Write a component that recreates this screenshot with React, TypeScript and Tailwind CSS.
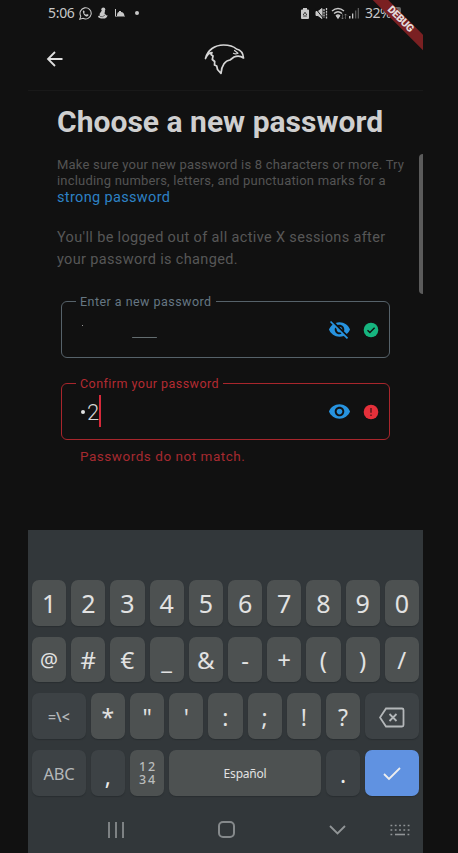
import React from "react";

const keyBase = "flex h-[45.5px] items-center justify-center rounded-[7px] shadow-[0_1px_1px_#292e31]";
const light = "bg-[#4d5151] text-[#e2e2e2]";
const dark = "bg-[#3d4245] text-[#b4b7b9]";

function Key({ children, className = "w-[34.2px]", tone = light, shift = "mt-[2px]" }: { children: React.ReactNode; className?: string; tone?: string; shift?: string }) {
  return (
    <div className={`${keyBase} ${tone} ${className}`}>
      <span className={`leading-none ${shift}`}>{children}</span>
    </div>
  );
}

function StatusBar() {
  return (
    <div className="flex h-[26px] items-center pl-[20px] text-[#c8c8c8]">
      <span className="w-[31px] whitespace-nowrap font-['Noto_Sans'] text-[14px] leading-none tracking-[-0.3px]">5:06</span>
      <svg width="13" height="13" viewBox="0 0 24 24" fill="none" stroke="currentColor" strokeWidth="2">
        <path d="M1.5 22.5l1.8-5.6a10.3 10.3 0 1 1 4 3.9z" />
        <path d="M7.2 6.7l2-.3 1.5 3-1.2 1.8c1 1.8 2 2.6 3.7 3.3l1.5-1.5 2.9 1.4c-.1 2-1.6 3-3.1 3C11 17.400 6.500 12 7.200 6.700z" fill="currentColor" stroke="none" />
      </svg>
      <svg className="ml-[6px]" width="10" height="12" viewBox="0 0 10 12" fill="currentColor">
        <circle cx="5.300" cy="2.500" r="2" />
        <path d="M3.500 4h3.500l-.5 2.500 2 2L9.500 8l-.5 2-2 1.500H3L.5 10.500 0 9l2-.5L1.500 7z" />
        <path d="M2 9.500q3 1 5-1.500" fill="none" stroke="#111" strokeWidth=".5" />
      </svg>
      <svg className="ml-[7px]" width="10" height="10" viewBox="0 0 10 10" fill="currentColor">
        <path d="M0 1h1v7H0zM2 7q.3-3.200 2-3V3h2v1q3 .2 3.500 4H2z" /><path d="M0 8h10v1H0z" opacity=".5" />
      </svg>
      <i className="ml-[10px] h-[4px] w-[4px] rounded-full bg-current" />
      <svg className="ml-[161px]" width="10" height="13" viewBox="0 0 10 13">
        <path d="M3 1h4v1.500h1q1 0 1 1V11q0 1-1 1H2q-1 0-1-1V3.500q0-1 1-1h1z" fill="currentColor" />
        <path d="M3.200 8L5 5.300 6.800 8M3.200 9h3.600" fill="none" stroke="#111" strokeWidth=".8" />
      </svg>
      <svg className="ml-[5px]" width="13" height="13" viewBox="0 0 13 13" fill="none" stroke="currentColor">
        <path d="M1 4.500h2l4-3v10l-4-3H1z" fill="currentColor" /><path d="M.5 1.500l8 10" stroke="#111" strokeWidth="1" /><path d="M9 2v9M11.500 1v11" strokeDasharray="2 .8" strokeWidth="1.300" />
      </svg>
      <svg className="ml-[3px]" width="17" height="13" viewBox="0 0 17 13" fill="none" stroke="currentColor" strokeWidth="1.400">
        <path d="M1 4q6-5 12 0M3 6.500q4-3.500 8 0M5 9q2-2 4 0" /><path d="M6 9.500h2L7 11z" fill="currentColor" />
        <path d="M11.500 7v5M14.500 7v5M10 10.500l1.500 1.500 1.500-1.500M13 8.500L14.500 7 16 8.500" strokeWidth=".8" opacity=".45" />
      </svg>
      <svg width="12" height="12" viewBox="0 0 12 12" fill="currentColor">
        <path d="M1 9h1.500v2.500H1zM4 6.500h1.300v5H4z" /><path d="M7 3.500h1.300v8H7zM9.700 1H11v10.500H9.700z" opacity=".4" />
      </svg>
      <span className="ml-[5px] whitespace-nowrap font-['Noto_Sans'] text-[14px] leading-none tracking-[-0.5px]">32%</span>
      <i className="ml-[2px] h-[12px] w-[8px] rounded-[2px] bg-[#666]" />
    </div>
  );
}

function Eye({ off = false }: { off?: boolean }) {
  return (
    <svg width="23" height="23" viewBox="0 0 24 24" fill="#2793df">
      {off ? (
        <path d="M12 7c2.760 0 5 2.240 5 5 0 .65-.13 1.260-.36 1.830l2.920 2.920c1.510-1.260 2.700-2.890 3.430-4.750-1.730-4.390-6-7.500-11-7.500-1.400 0-2.740.25-3.980.7l2.160 2.160C10.740 7.130 11.350 7 12 7zM2 4.270l2.280 2.280.46.46C3.080 8.300 1.780 10.020 1 12c1.730 4.390 6 7.500 11 7.500 1.550 0 3.030-.3 4.380-.84l.42.42L19.730 22 21 20.730 3.270 3 2 4.270zM7.530 9.800l1.550 1.550c-.05.21-.08.43-.08.65 0 1.660 1.340 3 3 3 .22 0 .44-.03.65-.08l1.550 1.550c-.67.33-1.410.53-2.200.53-2.760 0-5-2.240-5-5 0-.79.2-1.530.53-2.200zm4.310-.78l3.150 3.150.02-.16c0-1.660-1.340-3-3-3l-.17.01z" />
      ) : (
        <path d="M12 4.500C7 4.500 2.730 7.610 1 12c1.730 4.390 6 7.500 11 7.500s9.270-3.110 11-7.500c-1.730-4.390-6-7.500-11-7.500zM12 17c-2.760 0-5-2.240-5-5s2.240-5 5-5 5 2.240 5 5-2.240 5-5 5zm0-8c-1.660 0-3 1.340-3 3s1.340 3 3 3 3-1.340 3-3-1.340-3-3-3z" />
      )}
    </svg>
  );
}

function Status({ ok = false }: { ok?: boolean }) {
  return (
    <svg className="ml-[12px]" width="16" height="16" viewBox="0 0 16 16">
      <circle cx="8" cy="8" r="7.300" fill={ok ? "#16b57f" : "#e5303a"} />
      {ok ? <path d="M4.500 8.200l2.400 2.400 4.700-4.900" fill="none" stroke="#111" strokeWidth="1.400" /> : <path d="M8 4v4.700M8 10.400v1.700" stroke="#791c22" strokeWidth="1.900" />}
    </svg>
  );
}

export default function App() {
  return (
    <div className="h-[853px] w-[458px] overflow-hidden bg-[#111111] font-['Roboto',sans-serif]">
      <div className="relative ml-[28px] flex h-[853px] w-[395px] flex-col overflow-hidden">
        <StatusBar />
        <div className="absolute right-[-22px] top-[14px] flex h-[11px] w-[90px] origin-center rotate-45 items-center justify-center bg-[#7a2022] text-[10.5px] font-black leading-none tracking-[-0.3px] text-[#e4dddd]">DEBUG</div>
        <header className="flex h-[65px] items-center border-b border-[#191919] pl-[18px]">
          <svg className="mt-[2px]" width="18" height="18" viewBox="0 0 18 18" fill="none" stroke="#dedede" strokeWidth="1.800"><path d="M16.500 9H2.500M9 2L2 9l7 7" /></svg>
          <svg className="ml-[140px] mt-[4px]" width="42" height="34" viewBox="0 0 42 34" fill="none" stroke="#d6d6d6" strokeWidth="1.700" strokeLinejoin="round" strokeLinecap="round">
            <path d="M1.500 15.500C3.500 7 11 2 19.500 2c6 0 10 1.200 13 4 4 1 6.700 4.500 7 9-3-2.300-6.500-2.200-9.500-1l-4 3c-4.500.5-8.500 5-9 13.500l-3.500-4-.8-3.500-2.200-1 .2-3.500-2.400-2 .7-3.500-2-1.500 1-2q-4 .5-6.500 6z" />
            <path d="M30.500 7.500l3.500 2.800q-2.500 1.200-4.500 0" strokeWidth="1.200" />
          </svg>
        </header>
        <div className="flex h-[439px]">
          <main className="w-[391px] pl-[29px]">
            <h1 className="mt-[12px] whitespace-nowrap text-[30px] font-bold leading-[38px] tracking-[0.02px] text-[#cfcfcf]">Choose a new password</h1>
            <p className="mt-[16px] whitespace-nowrap text-[13px] leading-[15.5px] tracking-[0.2px] text-[#545454]">Make sure your new password is 8 characters or more. Try<br />including numbers, letters, and punctuation marks for a</p>
            <p className="mt-px whitespace-nowrap text-[14.5px] leading-[18px] tracking-[0.35px] text-[#2d81c5]">strong password</p>
            <p className="mt-[20px] whitespace-nowrap text-[14.5px] leading-[21.5px] tracking-[0.35px] text-[#575757]">You'll be logged out of all active X sessions after<br />your password is changed.</p>
            <fieldset className="ml-[4px] mt-[22px] flex h-[66px] w-[329px] items-center rounded-[6px] border border-[#56626a] pl-[19px] pr-[10px]">
              <legend className="ml-[-5px] whitespace-nowrap px-[4px] pt-px text-[12.5px] leading-[17px] tracking-[0.46px] text-[#667783]">Enter a new password</legend>
              <span className="mb-[17px] ml-px h-px w-px bg-[#999]" />
              <span className="ml-[49px] mt-[8px] h-px w-[25px] rounded-full bg-[#636d70]" />
              <div className="mb-[8px] ml-auto flex items-center"><Eye off /><Status ok /></div>
            </fieldset>
            <fieldset className="ml-[4px] mt-[16px] flex h-[66px] w-[329px] items-center rounded-[6px] border border-[#a8262c] pl-[19px] pr-[10px]">
              <legend className="ml-[-5px] whitespace-nowrap px-[4px] pt-px text-[12.5px] leading-[17px] tracking-[0.46px] text-[#b42b31]">Confirm your password</legend>
              <i className="mb-[7px] h-[4px] w-[4px] rounded-full bg-[#e2e2e2]" />
              <span className="mb-[6px] ml-[2px] text-[22px] font-light leading-none text-[#d5d5d5]">2</span>
              <i className="mb-[10px] h-[32px] w-[2px] bg-[#d6293a]" />
              <div className="mb-[8px] ml-auto flex items-center"><Eye /><Status /></div>
            </fieldset>
            <p className="ml-[23px] mt-[7px] whitespace-nowrap text-[13.5px] leading-[18px] tracking-[0.53px] text-[#a52a30]">Passwords do not match.</p>
          </main>
          <div className="mt-[63px] h-[140px] w-[4px] rounded-l-[4px] bg-[#5b5b5b]" />
        </div>
        <section className="h-[323px] bg-[#32373a] px-[4px] pt-[50px] font-['Noto_Sans',sans-serif] text-[23px]">
          <div className="flex flex-col gap-[11.2px]">
            <div className="flex gap-[5px]">{"1234567890".split("").map((k) => <Key key={k} shift="mt-[2px] text-[25px]">{k}</Key>)}</div>
            <div className="flex gap-[5px]">{"@#€_&-+()/".split("").map((k) => <Key key={k} shift={k === "@" ? "mt-px text-[20px]" : "mt-[2px] text-[24px]"}>{k}</Key>)}</div>
            <div className="flex gap-[5px]">
              <Key className="w-[53.8px]" tone={dark} shift="text-[14px] font-semibold mt-px">=\&lt;</Key>
              {"*\"':;!?".split("").map((k) => <Key key={k}>{k}</Key>)}
              <Key className="w-[53.8px]" tone={dark} shift="mt-[2px]">
                <svg width="26" height="21" viewBox="0 0 26 21" fill="none" stroke="currentColor" strokeWidth="1.800"><path d="M7 1.500h16q1.500 0 1.500 1.500v15q0 1.500-1.500 1.500H7L1 10.500zM10.500 7l7 7M17.500 7l-7 7" /></svg>
              </Key>
            </div>
            <div className="flex gap-[5px]">
              <Key className="w-[53.8px]" tone={dark} shift="mt-[2px] text-[16.5px] tracking-[-0.3px]">ABC</Key>
              <Key tone="bg-[#3d4245] text-[#ececec]" shift="mt-[7px]">,</Key>
              <Key shift="text-[12.5px] font-medium text-[#b9bcbc]">
                <span className="block h-[13px] pl-[2px] leading-[13px] tracking-[2px]">12</span>
                <span className="block h-[13px] pl-[2px] leading-[13px] tracking-[2px]">34</span>
              </Key>
              <Key className="w-[151.8px]" shift="mt-[2px] text-[12px] tracking-[-0.2px]">Español</Key>
              <Key tone="bg-[#3d4245] text-[#ececec]" shift="mt-[4px]">.</Key>
              <Key className="w-[53.8px]" tone="bg-[#6092e1] text-[#eeeeee]">
                <svg width="18" height="14" viewBox="0 0 18 14" fill="none" stroke="currentColor" strokeWidth="1.800"><path d="M1 7l5 5L17 1" /></svg>
              </Key>
            </div>
          </div>
          <div className="mt-[25px] flex h-[18px] items-center text-[#919597]">
            <svg className="ml-[76px]" width="16" height="16" viewBox="0 0 16 16" stroke="currentColor" strokeWidth="1.600"><path d="M1 0v16M8 0v16M15 0v16" /></svg>
            <i className="ml-[94px] h-[17px] w-[17px] rounded-[5px] border-2 border-[#85898b]" />
            <svg className="ml-[94px]" width="17" height="10" viewBox="0 0 17 10" fill="none" stroke="currentColor" strokeWidth="1.800"><path d="M1 1l7.500 7.500L16 1" /></svg>
            <svg className="ml-[44px]" width="20" height="12" viewBox="0 0 20 12" fill="none" stroke="currentColor" strokeWidth="1.600"><path d="M.5 1.500h19M.5 6h19M.5 10.500H3M17.500 10.500H20" strokeDasharray="1.800 2.500" /><path d="M5 10.500h10" /></svg>
          </div>
        </section>
      </div>
    </div>
  );
}
